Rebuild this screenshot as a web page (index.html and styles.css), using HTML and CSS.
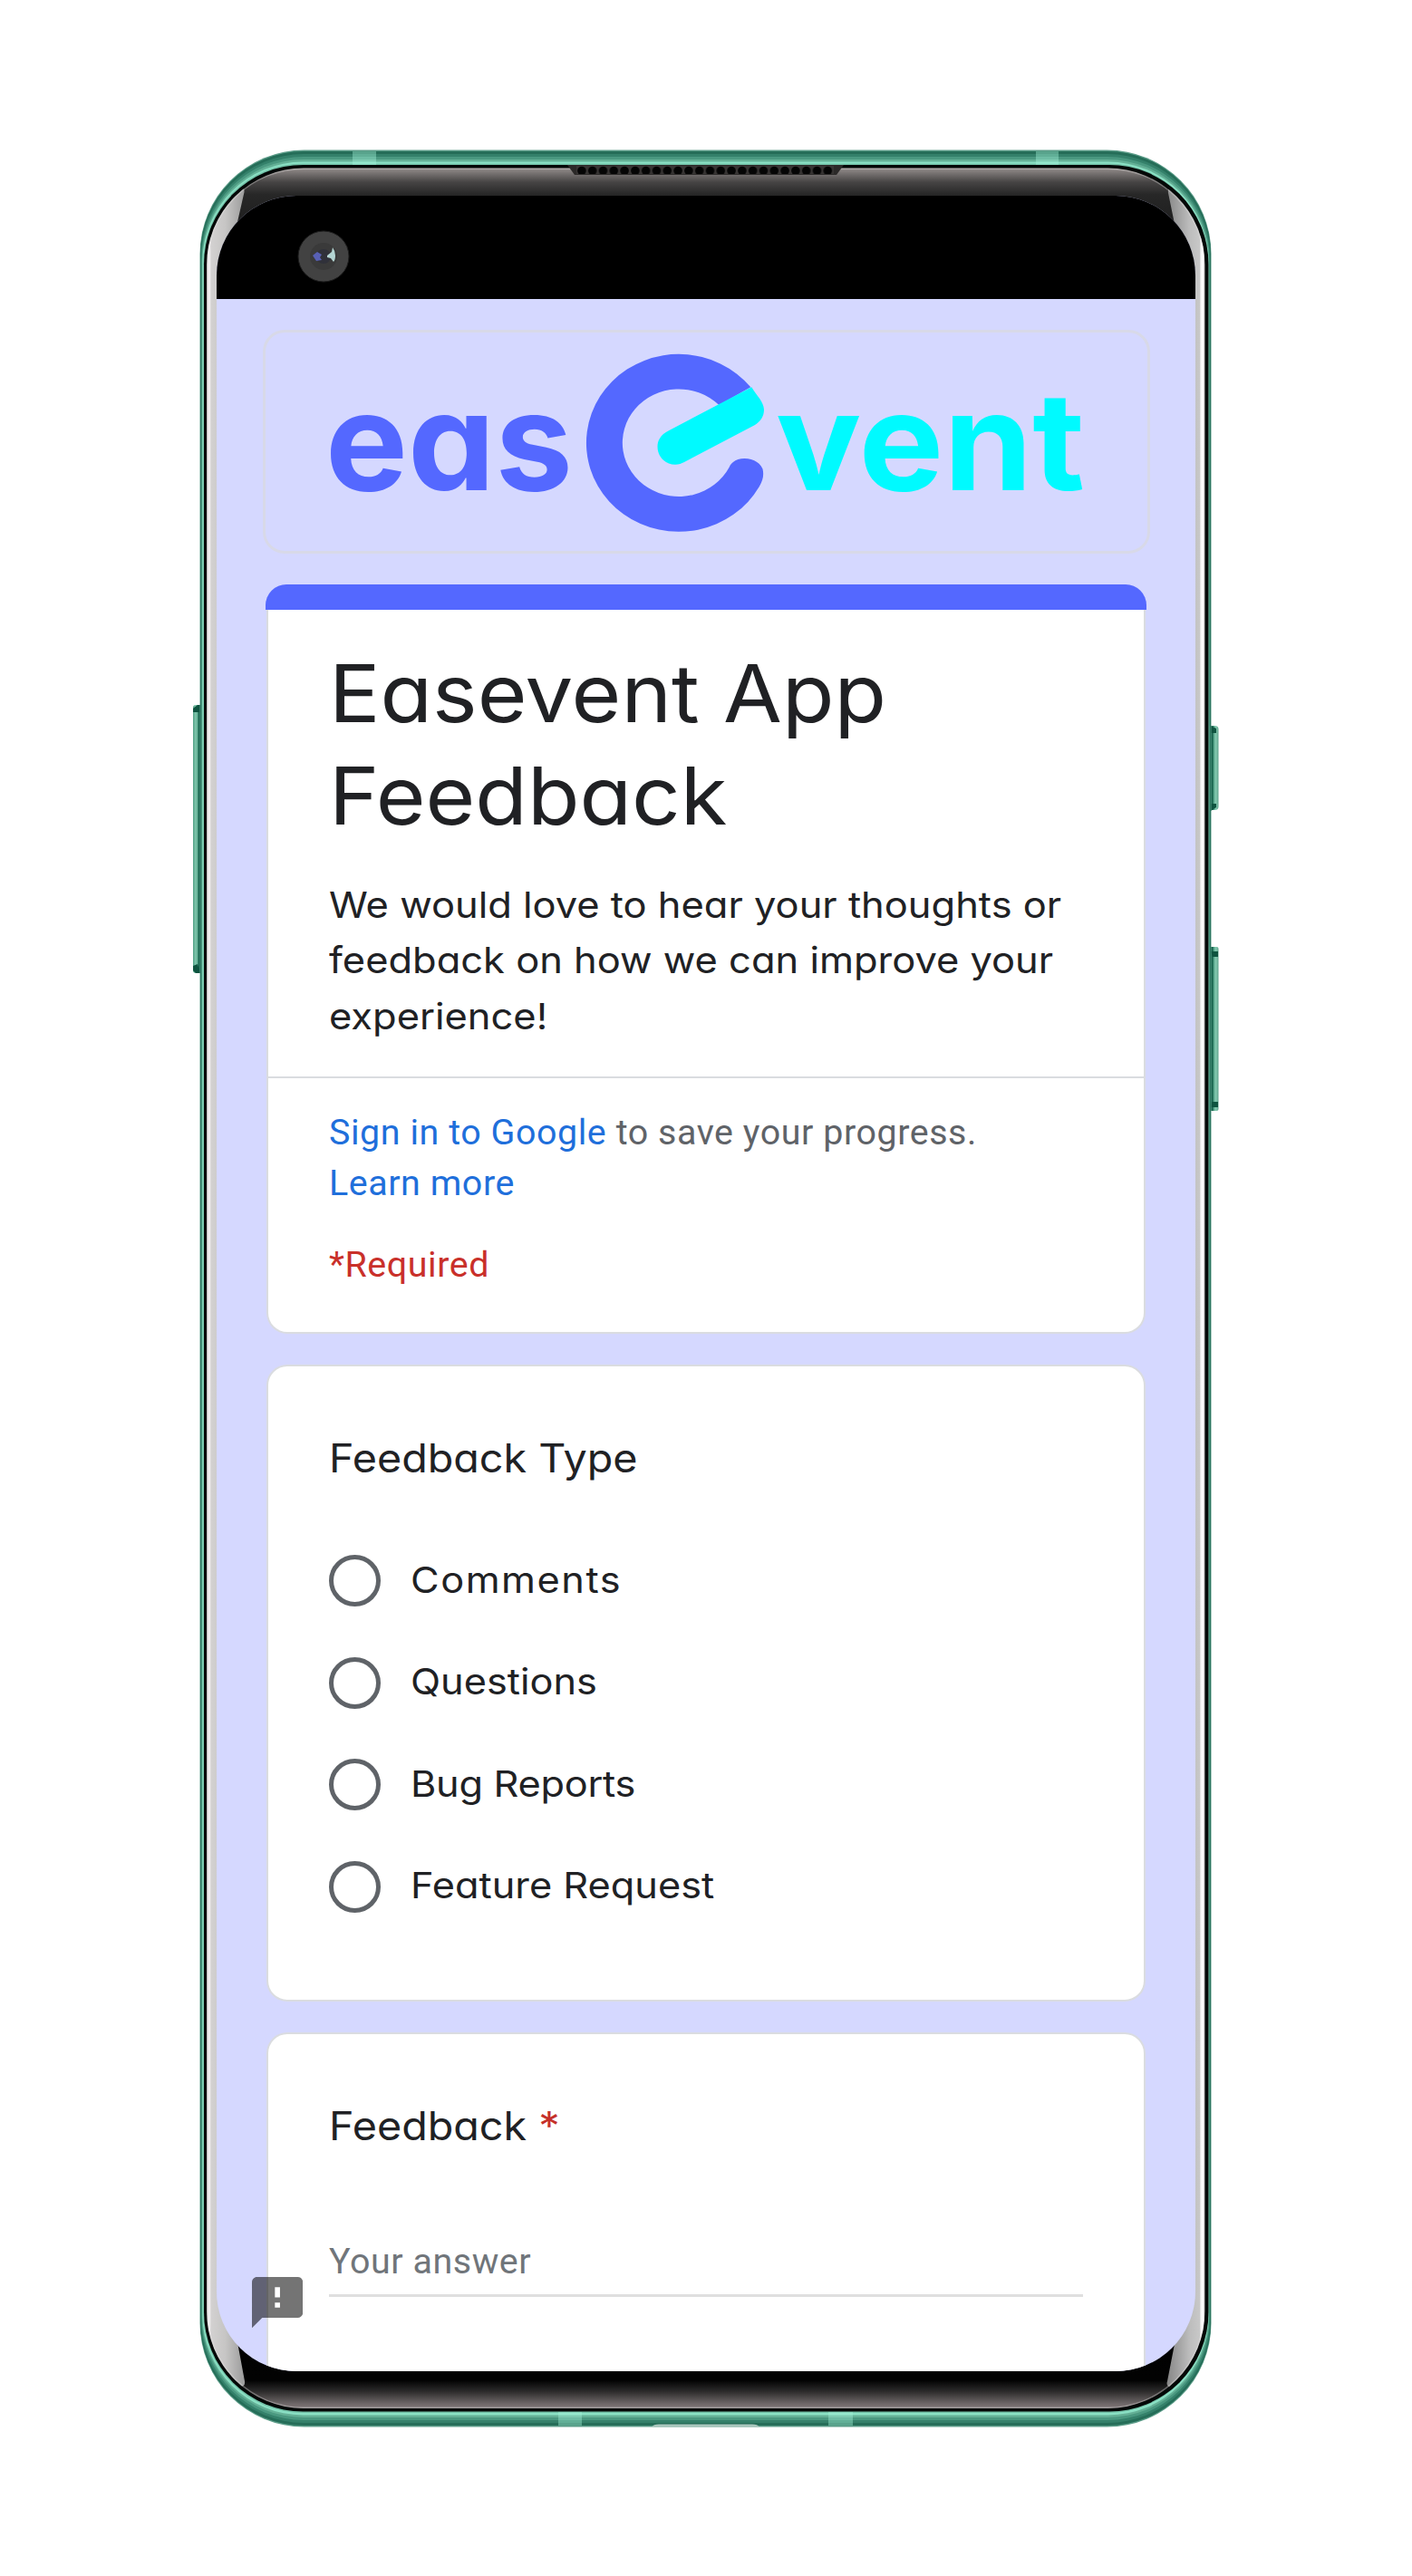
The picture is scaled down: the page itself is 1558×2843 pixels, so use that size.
FILE: index.html
```
<!DOCTYPE html>
<html lang="en">
<head>
<meta charset="utf-8">
<title>Easevent App Feedback</title>
<link rel="stylesheet" href="styles.css">
</head>
<body>
<main class="stage">
  <svg class="frame" viewBox="0 0 1558 2843" aria-hidden="true">
    <defs>
      <linearGradient id="glass" gradientUnits="userSpaceOnUse" x1="0" y1="185" x2="0" y2="2659">
        <stop offset="0" stop-color="#9a9391"/>
        <stop offset=".002" stop-color="#7d7877"/>
        <stop offset=".0065" stop-color="#464444"/>
        <stop offset=".012" stop-color="#272727"/>
        <stop offset=".03" stop-color="#1c1c1c"/>
        <stop offset=".9" stop-color="#000"/>
        <stop offset=".987" stop-color="#020202"/>
        <stop offset=".992" stop-color="#2c2b2b"/>
        <stop offset=".9975" stop-color="#6e6768"/>
        <stop offset="1" stop-color="#857c7d"/>
      </linearGradient>
      <linearGradient id="edgeL" gradientUnits="userSpaceOnUse" x1="228" y1="0" x2="270" y2="0">
        <stop offset="0" stop-color="#8a8a8a"/>
        <stop offset=".04" stop-color="#f4f3f3"/>
        <stop offset=".08" stop-color="#f1eff0"/>
        <stop offset=".12" stop-color="#d3d1d1"/>
        <stop offset=".5" stop-color="#c6c5c4"/>
        <stop offset="1" stop-color="#9b9b9b"/>
      </linearGradient>
      <linearGradient id="edgeR" gradientUnits="userSpaceOnUse" x1="1330" y1="0" x2="1287" y2="0">
        <stop offset="0" stop-color="#555"/>
        <stop offset=".05" stop-color="#fff"/>
        <stop offset=".12" stop-color="#f4f4f4"/>
        <stop offset=".14" stop-color="#c8c8c8"/>
        <stop offset=".4" stop-color="#bdbdbd"/>
        <stop offset="1" stop-color="#858585"/>
      </linearGradient>
      <linearGradient id="keyL" x1="0" x2="1" y1="0" y2="0">
        <stop offset="0" stop-color="#4f9f84"/>
        <stop offset=".3" stop-color="#84c9b0"/>
        <stop offset=".5" stop-color="#5aa88d"/>
        <stop offset=".65" stop-color="#15604a"/>
        <stop offset="1" stop-color="#2d7d66"/>
      </linearGradient>
      <linearGradient id="keyR" x1="1" x2="0" y1="0" y2="0">
        <stop offset="0" stop-color="#5fa38c"/>
        <stop offset=".3" stop-color="#84c9b0"/>
        <stop offset=".5" stop-color="#5aa88d"/>
        <stop offset=".65" stop-color="#15604a"/>
        <stop offset="1" stop-color="#2d7d66"/>
      </linearGradient>
      <pattern id="mesh" patternUnits="userSpaceOnUse" x="636" y="182" width="11.8" height="14">
        <rect width="11.8" height="14" fill="#383534"/>
        <circle cx="5.9" cy="6.5" r="4.8" fill="#050505"/>
      </pattern>
      <clipPath id="glassClip"><rect x="228" y="185.5" width="1101.5" height="2472.500" rx="107"/></clipPath>
    </defs>

    <rect x="213" y="778" width="10" height="296" rx="3" fill="url(#keyL)"/>
    <path d="M213 782l5-4h3v8h-8zM213 1066l5-2 3 10h-5l-3-3z" fill="#0f5440"/>
    <rect x="1334.500" y="801" width="10" height="93" rx="4" fill="url(#keyR)"/>
    <path d="M1336 801l6 3v5h-6zM1336 887h6v4l-6 4z" fill="#0f5440"/>
    <rect x="1334.500" y="1045" width="10" height="181" rx="2" fill="url(#keyR)"/>
    <path d="M1336 1050h8v6h-6zM1337 1216h7v6h-8z" fill="#0f5440"/>

    <rect x="220.500" y="165.500" width="1116" height="2513" rx="115" fill="#5b9c88"/>
    <rect x="221" y="167" width="1115" height="2510" rx="114" fill="#256d58"/>
    <rect x="221.600" y="170" width="1113.800" height="2504" rx="113.500" fill="#34806a"/>
    <rect x="222.200" y="173" width="1112.600" height="2498" rx="113" fill="#4a9880"/>
    <rect x="222.800" y="176" width="1111.400" height="2492" rx="112" fill="#64b096"/>
    <rect x="223.400" y="178.500" width="1110.200" height="2487" rx="111" fill="#8ae0c4"/>
    <rect x="224.300" y="180.500" width="1108.400" height="2482.500" rx="110" fill="#74c3a9"/>
    <path d="M389 167h26v15h-26zM1143 167h25v15h-25zM616 2662h26v15h-26zM914 2662h27v15h-27z" fill="#a5f5dc" opacity=".4"/>
    <path d="M719 2678.500q2-3 8-3h103q6 0 8 3z" fill="#a9c6bd"/>
    <rect x="225" y="182" width="1108.500" height="2479.500" rx="109.500" fill="#040807"/>
    <rect x="228" y="185.500" width="1101.500" height="2472.500" rx="107" fill="url(#glass)"/>
    <g clip-path="url(#glassClip)">
      <path d="M220 205h44q6 0 5.500 7L262 245V2585l8 43q1 6-6 6h-44z" fill="url(#edgeL)"/>
      <path d="M1338 205h-43q-7 0-6 8l7 34V2587l-8 41q-2 6 5 7h45z" fill="url(#edgeR)"/>
      <rect x="228.700" y="186.200" width="1100.100" height="2471.100" rx="106.500" fill="none" stroke="#e8e4e4" stroke-opacity=".35" stroke-width="1.500"/>
    </g>
    <path d="M626 182H931L923 193H634z" fill="#2b2928"/>
    <path d="M636 183h284v9H636z" fill="url(#mesh)"/>
  </svg>

  <div class="screen">
    <div class="status">
      <svg class="camera" viewBox="0 0 58 58" aria-hidden="true">
        <circle cx="29" cy="29" r="28" fill="#424242" stroke="#1d1d1d"/>
        <circle cx="29" cy="29" r="15" fill="#3a3a3a"/>
        <circle cx="29" cy="29" r="8" fill="#30313a"/>
        <path d="M17 28l5-4 5 3-2 3 2 3-6 1z" fill="#5860b4"/>
        <path d="M33 28l5-4 1-5q3 4 3 9t-2 7l-3-4-4-1z" fill="#b4d5d3"/>
      </svg>
    </div>

    <div class="form">
      <div class="brand">
        <svg class="logo" viewBox="290 365 978 246" role="img" aria-label="easevent">
          <text class="logo-text" x="359" y="541.300" fill="#5468ff" textLength="273" lengthAdjust="spacingAndGlyphs">eas</text>
          <path d="M828.300 427.300A102 98 0 1 0 837.800 537C842 530 843 524 841.500 517.500C838.500 510 830 506 821.500 506C813 506 807 510 804.600 515.700A62.300 59.300 0 1 1 793.400 447z" fill="#5468ff"/>
          <path d="M829.300 427.300L738.400 475C728 480 725.500 487 725.500 493C725.500 504 734 512.700 745 512.700C749 512.700 752 511.500 755 510L833 469C839 465 843 460 843 452C842.500 443 835 437 829.300 427.300z" fill="#00faff"/>
          <text class="logo-text" x="856" y="541.300" fill="#00faff" textLength="341" lengthAdjust="spacingAndGlyphs">vent</text>
        </svg>
      </div>

      <div class="accent"></div>
      <section class="card intro">
        <h1><span>Easevent App</span><br><span>Feedback</span></h1>
        <p class="lead"><span>We would love to hear your thoughts or</span><br><span>feedback on how we can improve your</span><br><span>experience!</span></p>
        <div class="account">
          <p><a>Sign in to Google</a> to save your progress.<br><a>Learn more</a></p>
          <p class="required">*Required</p>
        </div>
      </section>

      <section class="card question">
        <h2><span>Feedback Type</span></h2>
        <ul>
          <li><i class="radio"></i><span class="loose">Comments</span></li>
          <li><i class="radio"></i><span>Questions</span></li>
          <li><i class="radio"></i><span class="tight">Bug Reports</span></li>
          <li><i class="radio"></i><span>Feature Request</span></li>
        </ul>
      </section>

      <section class="card answer">
        <h2><span>Feedback <b>*</b></span></h2>
        <div class="field">Your answer</div>
      </section>
    </div>

    <svg class="report" viewBox="2 2 20 20" aria-hidden="true"><path d="M20 2H4c-1.100 0-1.990.9-1.990 2L2 22l4-4h14c1.100 0 2-.9 2-2V4c0-1.100-.9-2-2-2zm-7 12h-2v-2h2v2zm0-4h-2V6h2v4z"/></svg>
  </div>
</main>
</body>
</html>
```
FILE: styles.css
```
* { box-sizing: border-box; }
body { margin: 0; background: #fff; }
h1, h2, p, ul { margin: 0; padding: 0; font-weight: 400; }
ul { list-style: none; }

.stage {
  position: relative;
  width: 1558px;
  height: 2843px;
  padding: 216px 0 0 239px;
  overflow: hidden;
}
.frame { position: absolute; inset: 0; width: 1558px; height: 2843px; }

.screen {
  position: relative;
  width: 1080px;
  height: 2401px;
  border-radius: 88px;
  overflow: hidden;
  background: #d5d8ff;
  color: #202124;
  font-family: Inter, "Open Sans", sans-serif;
  font-feature-settings: "cv11";
}
.status { height: 114px; padding: 38px 0 0 89px; background: #000; }
.camera { display: block; width: 58px; height: 58px; }

.form { display: flex; flex-direction: column; align-items: center; padding-top: 34px; }
.brand {
  width: 979px;
  height: 247px;
  margin-bottom: 34px;
  border: 3px solid #d8d9e8;
  border-radius: 24px;
}
.logo { display: block; width: 978px; height: 246px; margin: -2px 0 0 -3px; }
.logo-text { font-family: Inter, sans-serif; font-weight: 700; font-size: 151px; font-feature-settings: "cv11"; }

.card {
  width: 970px;
  margin-bottom: 34px;
  padding: 0 67px;
  border: 2px solid #dadce0;
  border-radius: 23px;
  background: #fff;
}
.card span {
  display: inline-block;
  white-space: nowrap;
  transform-origin: 0 50%;
}
.accent { width: 972px; height: 28px; border-radius: 23px 23px 0 0; background: #5468ff; }
.intro { height: 799px; border-top: 0; border-radius: 0 0 23px 23px; }

h1 { padding-top: 36px; font-size: 88px; line-height: 112.500px; }
.card h1 span { transform: scaleX(1.068); }
.lead { padding-top: 33.500px; font-size: 40px; line-height: 61.500px; }
.card .lead span { transform: scaleX(1.086); }
.account {
  margin: 36px -67px 0;
  padding: 32px 67px 0;
  border-top: 2.500px solid #dadce0;
  font: 39.400px/56.250px Roboto, sans-serif;
  letter-spacing: .56px;
  color: #5f6368;
}
.account a { color: #1f6fdb; }
.required { padding-top: 33px; color: #c9302a; }

.question { height: 703px; }
h2 { padding-top: 68px; font-size: 43.500px; line-height: 67.500px; }
.card h2 span { transform: scaleX(1.073); }
ul { padding-top: 45px; }
li { display: flex; align-items: center; gap: 33px; height: 112.500px; font-size: 39.500px; }
.card li span { padding-bottom: 2px; transform: scaleX(1.096); }
.loose { letter-spacing: 1.400px; }
.tight { letter-spacing: -.250px; }
.radio { width: 57px; height: 57px; border: 5.500px solid #5f6368; border-radius: 50%; }

.answer { height: 600px; }
.answer b { font-weight: 400; color: #c5302a; }
.field {
  margin-top: 87px;
  padding-bottom: 8px;
  border-bottom: 3px solid #dfdfdf;
  font: 39.400px/56px Roboto, sans-serif;
  letter-spacing: .56px;
  color: #70757a;
}
.report {
  position: absolute;
  left: 39px;
  top: 2297px;
  width: 56.250px;
  height: 56.250px;
  opacity: .54;
}
```
